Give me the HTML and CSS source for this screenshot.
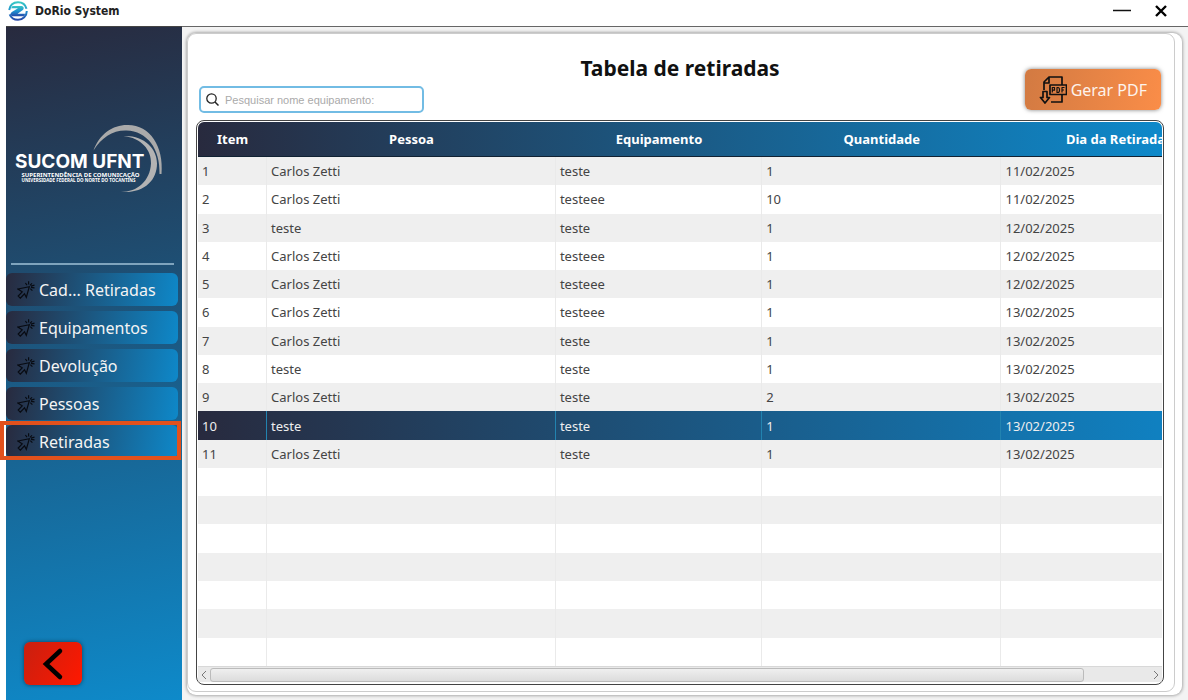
FILE: index.html
```html
<!DOCTYPE html>
<html lang="pt-BR">
<head>
<meta charset="utf-8">
<title>DoRio System</title>
<link rel="stylesheet" href="styles.css">
</head>
<body>
<svg class="symbols" aria-hidden="true">
  <symbol id="click" viewBox="0 0 18 18">
    <path d="M.9 8 12.300 5.700 9.300 16.300 7.500 12.800 3.300 17.200 1.200 15 5.200 10.800Z M12.900 4.400 15 2.300 M11.600 3.600 11.600 .3 M10 4.200 8.400 2 M13.900 6.300 17.500 6.900 M13.300 7.600 15.400 9.700 M13.900 5.100 17.500 4.200"/>
  </symbol>
</svg>
<div class="window">
  <header class="titlebar">
    <svg class="app-logo" viewBox="0 0 20 20" aria-hidden="true">
      <defs><linearGradient id="lg" x1="0" y1="0" x2="0" y2="1"><stop offset="0" stop-color="#38c8c4"/><stop offset=".5" stop-color="#1e8fd0"/><stop offset="1" stop-color="#2748a8"/></linearGradient></defs>
      <path fill="none" stroke="url(#lg)" stroke-width="2" d="M1.200 9C2 4 5.500 1.200 10 1.200c4 0 7.500 2.500 8.500 6.500M18.800 10c0 5-4 8.800-8.800 8.800-3.800 0-7-2.200-8.300-5.500"/>
      <path fill="url(#lg)" d="M4.500 5h8.500c3 0 3.500 2.800 1.500 4.300L9.500 12.700h8l-2 2.600H6c-4 0-4.500-2.700-1.800-4.500L10 7.300H3Z"/>
    </svg>
    <span class="app-name">DoRio System</span>
    <button class="win-btn" aria-label="Minimizar"><svg width="20" height="16" viewBox="0 0 20 16"><path d="M1 7.500h18" stroke="#111" stroke-width="1.500"/></svg></button>
    <button class="win-btn" aria-label="Fechar"><svg width="14" height="14" viewBox="0 0 14 14"><path d="M2 2l10 10M12 2L2 12" stroke="#000" stroke-width="2.400"/></svg></button>
  </header>
  <div class="body">
    <aside class="sidebar">
      <svg class="brand" viewBox="0 0 300 140" role="img" aria-label="SUCOM UFNT">
        <path fill="#aaa" d="M157 53C169 19 197 1 226 2c44 0 72 43 67 98h-4c2-50-25-86-66-87-27-1-50 14-66 40Z"/>
        <path fill="#b3b3b3" d="M217 24c40-2 67 24 67 55 0 34-26 60-72 57 33 0 58-22 60-57 1-27-19-51-55-55Z"/>
        <text class="brand-name" x="0" y="87">SUCOM UFNT</text>
        <text class="brand-sub" x="13" y="105">SUPERINTENDÊNCIA DE COMUNICAÇÃO</text>
        <text class="brand-small" x="13" y="115">UNIVERSIDADE FEDERAL DO NORTE DO TOCANTINS</text>
      </svg>
      <nav class="menu">
        <button class="menu-btn"><svg><use href="#click"/></svg>Cad... Retiradas</button>
        <button class="menu-btn"><svg><use href="#click"/></svg>Equipamentos</button>
        <button class="menu-btn"><svg><use href="#click"/></svg>Devolução</button>
        <button class="menu-btn"><svg><use href="#click"/></svg>Pessoas</button>
        <button class="menu-btn current"><svg><use href="#click"/></svg>Retiradas</button>
      </nav>
      <button class="back" aria-label="Voltar"><svg width="22" height="34" viewBox="0 0 22 34"><path d="M18 4 4 17l14 13" fill="none" stroke="#000" stroke-width="4.500" stroke-linecap="round"/></svg></button>
    </aside>
    <main class="content">
      <div class="outer-card">
        <section class="card">
          <div class="toolbar">
            <label class="search">
              <svg width="13" height="13" viewBox="0 0 13 13"><circle cx="5.500" cy="5.500" r="4.700" fill="none" stroke="#222" stroke-width="1.300"/><path d="M9 9l3.500 3.500" stroke="#222" stroke-width="1.500"/></svg>
              <input type="text" placeholder="Pesquisar nome equipamento:" aria-label="Pesquisar nome equipamento">
            </label>
            <h1>Tabela de retiradas</h1>
            <button class="pdf">
              <svg width="28" height="28" viewBox="0 0 28 28" fill="none" stroke="#111" stroke-width="1.700" stroke-linejoin="round"><path d="M5 14V6l5-5h13v8M5 7h5V1M12 26h11v-7M4 15.500h4v6h2.500L6 27l-4.500-5.500H4Z"/><path d="M11 9h16.500v9.500H11Z"/><path stroke-width="1.200" d="M13.300 16.500v-5h2.200v2.700h-2M18 11.500v5h1q1.500 0 1.500-2.500T19 11.500ZM23 16.500v-5h2.500M23 14h2"/></svg>
              Gerar PDF
            </button>
          </div>
          <div class="table-frame">
            <div class="viewport">
              <table>
                <colgroup><col class="c-item"><col class="c-person"><col class="c-equip"><col class="c-qty"><col class="c-day"></colgroup>
                <thead><tr><th>Item</th><th>Pessoa</th><th>Equipamento</th><th>Quantidade</th><th>Dia da Retirada</th></tr></thead>
                <tbody>
                  <tr><td>1</td><td>Carlos Zetti</td><td>teste</td><td>1</td><td>11/02/2025</td></tr>
                  <tr><td>2</td><td>Carlos Zetti</td><td>testeee</td><td>10</td><td>11/02/2025</td></tr>
                  <tr><td>3</td><td>teste</td><td>teste</td><td>1</td><td>12/02/2025</td></tr>
                  <tr><td>4</td><td>Carlos Zetti</td><td>testeee</td><td>1</td><td>12/02/2025</td></tr>
                  <tr><td>5</td><td>Carlos Zetti</td><td>testeee</td><td>1</td><td>12/02/2025</td></tr>
                  <tr><td>6</td><td>Carlos Zetti</td><td>testeee</td><td>1</td><td>13/02/2025</td></tr>
                  <tr><td>7</td><td>Carlos Zetti</td><td>teste</td><td>1</td><td>13/02/2025</td></tr>
                  <tr><td>8</td><td>teste</td><td>teste</td><td>1</td><td>13/02/2025</td></tr>
                  <tr><td>9</td><td>Carlos Zetti</td><td>teste</td><td>2</td><td>13/02/2025</td></tr>
                  <tr class="selected"><td>10</td><td>teste</td><td>teste</td><td>1</td><td>13/02/2025</td></tr>
                  <tr><td>11</td><td>Carlos Zetti</td><td>teste</td><td>1</td><td>13/02/2025</td></tr>
                  <tr><td></td><td></td><td></td><td></td><td></td></tr>
                  <tr><td></td><td></td><td></td><td></td><td></td></tr>
                  <tr><td></td><td></td><td></td><td></td><td></td></tr>
                  <tr><td></td><td></td><td></td><td></td><td></td></tr>
                  <tr><td></td><td></td><td></td><td></td><td></td></tr>
                  <tr><td></td><td></td><td></td><td></td><td></td></tr>
                  <tr><td></td><td></td><td></td><td></td><td></td></tr>
                </tbody>
              </table>
            </div>
            <div class="scrollbar">
              <button aria-label="Rolar para a esquerda"><svg width="6" height="10" viewBox="0 0 6 10"><path d="M5 1 1 5l4 4"/></svg></button>
              <div class="track"><div class="thumb"></div></div>
              <button aria-label="Rolar para a direita"><svg width="6" height="10" viewBox="0 0 6 10"><path d="m1 1 4 4-4 4"/></svg></button>
            </div>
          </div>
        </section>
      </div>
    </main>
  </div>
</div>
</body>
</html>
```
FILE: styles.css
```css
* { box-sizing: border-box; }
body {
  margin: 0;
  background: #fff;
  font-family: "Noto Sans", sans-serif;
  font-size: 13px;
  color: #444;
}
button { font: inherit; border: 0; padding: 0; background: none; cursor: pointer; }
.symbols { position: absolute; width: 0; height: 0; }
.window { display: flex; flex-direction: column; height: 100vh; overflow: hidden; }

.titlebar {
  display: flex;
  align-items: center;
  height: 26px;
  padding: 0 20px 4px 8px;
  flex: none;
}
.app-logo { width: 20px; height: 20px; }
.app-name { margin: 0 auto 0 7px; font: bold 12px "DejaVu Sans Condensed", "Noto Sans", sans-serif; color: #222; }
.win-btn { display: flex; margin-left: 22px; }

.body { display: flex; flex: 1; min-height: 0; padding-left: 6px; }
.sidebar {
  display: flex;
  flex-direction: column;
  width: 176px;
  flex: none;
  padding-bottom: 15px;
  border-top: 1px solid #444;
  background: linear-gradient(168deg, #282a3e, #0e8aca);
}
.brand { width: 150px; height: 70px; margin: 97px 0 0 9px; flex: none; }
.brand-name { font: bold 38px Inter, sans-serif; fill: #fff; }
.brand-sub { font: bold 12px "Noto Sans", sans-serif; fill: #fff; }
.brand-small { font: bold 9px "Noto Sans", sans-serif; fill: #fff; }
.menu {
  display: flex;
  flex-direction: column;
  gap: 5px;
  margin: 69px 4px 0 0;
  padding-top: 10px;
  position: relative;
}
.menu::before {
  content: "";
  position: absolute;
  top: 0;
  left: 5px;
  right: 4px;
  height: 2px;
  background: #7fa4bd;
}
.menu-btn {
  display: flex;
  align-items: center;
  gap: 4px;
  height: 33px;
  padding-left: 11px;
  border-radius: 6px;
  background: linear-gradient(100deg, #282a3e, #0e88c9);
  color: #f4f4f4;
  font-size: 16px;
  position: relative;
}
.menu-btn svg { width: 18px; height: 18px; fill: none; stroke: #080b12; stroke-width: 1.2; }
.current::after {
  content: "";
  position: absolute;
  inset: -4px -3px -2px -6px;
  border: 4px solid #e2511c;
}
.back {
  display: flex;
  align-items: center;
  justify-content: center;
  width: 58px;
  height: 43px;
  margin: auto 0 0 18px;
  border-radius: 6px;
  background: linear-gradient(120deg, #c82010, #ff1800);
  box-shadow: 0 0 4px rgba(0, 0, 0, .5);
}

.content {
  flex: 1;
  min-width: 0;
  padding: 6px 6px 5px 5px;
  border-top: 1px solid #666;
  background: #f3f3f3;
}
.outer-card {
  height: 100%;
  padding: 0 7px 3px 0;
  border-radius: 9px;
  background: #fff;
  box-shadow: 0 0 3px 1px rgba(0, 0, 0, .3);
}
.card {
  display: flex;
  flex-direction: column;
  height: 100%;
  padding: 0 10px 6px 8px;
  border: 1px solid #ccc;
  border-radius: 9px;
  background: #fff;
}
.toolbar {
  display: grid;
  grid-template-columns: 1fr auto 1fr;
  align-items: end;
  height: 86px;
  padding: 0 3px;
  flex: none;
}
.toolbar h1 {
  margin: 0 0 38px;
  font-size: 21px;
  line-height: 27px;
  text-align: center;
  color: #111;
}
.search {
  display: flex;
  align-items: center;
  gap: 6px;
  width: 225px;
  height: 27px;
  margin-bottom: 7px;
  padding: 0 5px;
  border: 2px solid #72bce4;
  border-radius: 5px;
}
.search input {
  flex: 1;
  min-width: 0;
  padding: 0;
  border: 0;
  outline: 0;
  font: 11px "Liberation Sans", Arial, sans-serif;
}
.search input::placeholder { color: #aaa; opacity: 1; }
.pdf {
  display: flex;
  align-items: center;
  justify-self: end;
  gap: 4px;
  height: 41px;
  margin-bottom: 10px;
  padding: 0 14px;
  border-radius: 6px;
  background: linear-gradient(100deg, #d27a42, #fa8d48);
  box-shadow: 0 0 4px rgba(0, 0, 0, .5);
  color: #fdf3ec;
  font-size: 16px;
  white-space: nowrap;
}
.pdf svg { flex: none; }

.table-frame {
  display: flex;
  flex-direction: column;
  flex: 1;
  min-height: 0;
  padding: 1px 1px 2px;
  border: 1px solid #444;
  border-radius: 8px;
  overflow: hidden;
}
.viewport {
  flex: 1;
  min-height: 0;
  overflow: hidden;
  border-radius: 6px 6px 0 0;
}
table { width: 107%; height: 100%; table-layout: fixed; border-collapse: separate; border-spacing: 0; }
.c-item { width: 6.7%; }
.c-person { width: 28%; }
.c-equip { width: 20%; }
.c-qty { width: 23.2%; }
thead tr { background: linear-gradient(90deg, #282a3e, #0e88c9 93%); }
.selected { background: linear-gradient(90deg, #282a3e, #1080c0 93%); }
th { height: 35px; padding: 0; color: #fff; font-size: 13px; border-bottom: 1px solid #123; }
td { height: 28px; padding: 0 4px; line-height: 18px; border-right: 1px solid #eaeaea; }
tbody tr:nth-child(odd) { background-color: #efefef; }
tbody .selected td { border-color: #2283b0; color: #eee; }
.scrollbar {
  display: flex;
  align-items: center;
  height: 16px;
  flex: none;
  border-top: 1px solid #d8d8d8;
  background: #e9e9e9;
}
.scrollbar button { display: flex; justify-content: center; width: 12px; }
.scrollbar path { fill: none; stroke: #777; }
.track { flex: 1; }
.thumb {
  width: 93%;
  height: 14px;
  border: 1px solid #bbb;
  border-radius: 3px;
  background: linear-gradient(#efefef, #dcdcdc);
}
```
